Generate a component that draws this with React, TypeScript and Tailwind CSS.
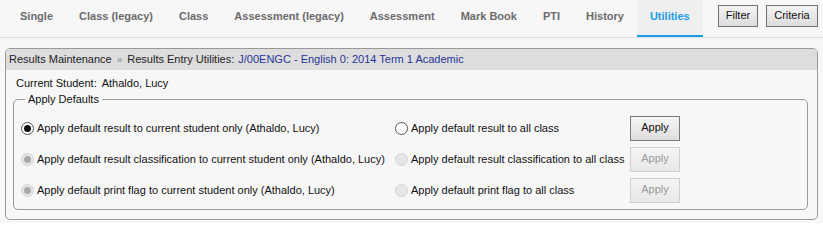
import React from "react";

type Tab = { id: string; label: string };

const tabs: Tab[] = [
  { id: "single", label: "Single" },
  { id: "class-legacy", label: "Class (legacy)" },
  { id: "class", label: "Class" },
  { id: "assessment-legacy", label: "Assessment (legacy)" },
  { id: "assessment", label: "Assessment" },
  { id: "markbook", label: "Mark Book" },
  { id: "pti", label: "PTI" },
  { id: "history", label: "History" },
  { id: "utilities", label: "Utilities" },
];

const rows = [
  {
    left: "Apply default result to current student only (Athaldo, Lucy)",
    right: "Apply default result to all class",
    enabled: true,
  },
  {
    left: "Apply default result classification to current student only (Athaldo, Lucy)",
    right: "Apply default result classification to all class",
    enabled: false,
  },
  {
    left: "Apply default print flag to current student only (Athaldo, Lucy)",
    right: "Apply default print flag to all class",
    enabled: false,
  },
];

function Radio({ checked, disabled }: { checked: boolean; disabled: boolean }) {
  // hand-drawn radio so it looks like the old windows style
  if (disabled) {
    return (
      <span className="w-[13px] h-[13px] rounded-full border border-[#d4d4d4] bg-[#e6e6e6] flex items-center justify-center shrink-0">
        {checked && <span className="w-[7px] h-[7px] rounded-full bg-[#a9a9a9]" />}
      </span>
    );
  }
  return (
    <span className="w-[13px] h-[13px] rounded-full border border-[#555] bg-white flex items-center justify-center shrink-0">
      {checked && <span className="w-[7px] h-[7px] rounded-full bg-[#111]" />}
    </span>
  );
}

function ApplyButton({ enabled }: { enabled: boolean }) {
  return (
    <button
      className={
        enabled
          ? "w-[50px] h-[25px] border border-[#7a7a7a] bg-gradient-to-b from-[#f6f6f6] to-[#dedede] text-[11px] text-[#111] pb-[3px]"
          : "w-[50px] h-[25px] border border-[#cfcfcf] bg-gradient-to-b from-[#f4f4f4] to-[#e8e8e8] text-[11px] text-[#9a9a9a] pb-[3px]"
      }
    >
      Apply
    </button>
  );
}

export default function App() {
  return (
    <div className="w-[823px] h-[223px] bg-[#f7f7f7] font-['Liberation_Sans',Arial,sans-serif] text-[11px] text-[#111] overflow-hidden">
      {/* Tabs + toolbar */}
      <div className="flex items-start h-[38px] border-b border-[#dddddd]">
        <nav className="flex ml-[7px]">
          {tabs.map((tab) =>
            tab.id === "utilities" ? (
              <div
                key={tab.id}
                className="h-[37px] px-[13px] flex items-center pb-[2px] bg-[#efefef] border-b-2 border-[#1a9be6] text-[11px] font-bold text-[#1a9be6] whitespace-nowrap"
              >
                {tab.label}
              </div>
            ) : (
              <div
                key={tab.id}
                className="h-[37px] px-[13px] flex items-center pb-[4px] text-[11px] font-bold text-[#6b6b6b] whitespace-nowrap"
              >
                {tab.label}
              </div>
            )
          )}
        </nav>
        <div className="ml-auto mr-[5px] mt-[5px] flex gap-[8px]">
          <button className="h-[22px] w-[40px] border border-[#707070] bg-gradient-to-b from-[#f4f4f4] to-[#dcdcdc] text-[11px] text-[#111] pb-[2px]">
            Filter
          </button>
          <button className="h-[22px] w-[52px] border border-[#707070] bg-gradient-to-b from-[#f4f4f4] to-[#dcdcdc] text-[11px] text-[#111] pb-[2px]">
            Criteria
          </button>
        </div>
      </div>

      {/* Results panel */}
      <div className="mx-[5px] mt-[10px] h-[172px] border border-[#9a9a9a] rounded-[5px] overflow-hidden">
        <div className="h-[21px] bg-[#dddddd] flex items-center px-[3px] text-[#222]">
          <span>Results Maintenance</span>
          <span className="mx-[5px] text-[#888] text-[10px]">»</span>
          <span>Results Entry Utilities:</span>
          <span className="ml-[4px] text-[#25369a]">J/00ENGC - English 0: 2014 Term 1 Academic</span>
        </div>

        <div className="px-[10px] pt-[5px]">
          <div className="h-[16px] flex items-center">
            <span>Current Student:</span>
            <span className="ml-[5px]">Athaldo, Lucy</span>
          </div>

          <fieldset className="mt-[1px] ml-[-3px] mr-[-1px] border border-[#9a9a9a] rounded-[5px] px-[7px] pt-[10px] pb-[6px]">
            <legend className="px-[3px] ml-[4px] leading-[14px]">Apply Defaults</legend>
            <div className="flex flex-col gap-[6px]">
              {rows.map((row, i) => (
                <div key={i} className="flex items-center h-[25px]">
                  <div className="w-[374px] flex items-center gap-[3px]">
                    <Radio checked={true} disabled={!row.enabled} />
                    <span className="whitespace-nowrap">{row.left}</span>
                  </div>
                  <div className="w-[235px] flex items-center gap-[3px]">
                    <Radio checked={false} disabled={!row.enabled} />
                    <span className="whitespace-nowrap">{row.right}</span>
                  </div>
                  <ApplyButton enabled={row.enabled} />
                </div>
              ))}
            </div>
          </fieldset>
        </div>
      </div>
    </div>
  );
}
